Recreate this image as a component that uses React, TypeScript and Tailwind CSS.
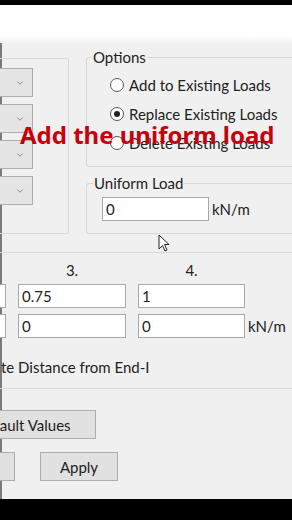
import { ChevronDown } from 'lucide-react';

const ui = { fontFamily: 'Lato, "Liberation Sans", sans-serif' };

function Combo() {
  return (
    <div className="flex h-[29px] w-[33px] items-center justify-end border border-l-0 border-[#adadad] bg-[#e5e5e5] pr-[7px]">
      <ChevronDown size={10} strokeWidth={2} className="text-[#777]" />
    </div>
  );
}

function Radio({ label, checked }: { label: string; checked?: boolean }) {
  return (
    <label className="flex h-[20px] items-center gap-[5px]">
      <span className="flex h-[14px] w-[14px] items-center justify-center rounded-full border border-[#555] bg-white">
        {checked && <span className="h-[6px] w-[6px] rounded-full bg-[#222]" />}
      </span>
      <span>{label}</span>
    </label>
  );
}

function Field({ value, w }: { value?: string; w: string }) {
  return (
    <div className={`flex h-[24px] ${w} items-center border border-[#a8a8a8] bg-white px-[3px]`}>
      {value}
    </div>
  );
}

function Cursor() {
  return (
    <svg width="13" height="19" viewBox="0 0 13 19" className="absolute left-[158px] top-[234px]">
      <path d="M1 1 L1 15 L4.5 11.5 L7 17 L9 16 L6.5 10.5 L11 10.5 Z" fill="white" stroke="#222" strokeWidth="1" strokeLinejoin="round" />
    </svg>
  );
}

export default function App() {
  return (
    <div className="relative h-[520px] w-[292px] overflow-hidden bg-black text-[15px] leading-[16px] text-[#222]" style={ui}>
      <div className="mt-[5px] h-[30px] bg-white" />
      <div className="h-[8px] bg-gradient-to-b from-white to-[#f2f2f2]" />

      <div className="flex h-[456px] flex-col border-l-2 border-[#7a7a7a] bg-[#f0f0f0]">
        <div className="flex items-start">
          {/* left group */}
          <div className="-ml-[2px] mt-[15px] flex h-[176px] w-[69px] shrink-0 flex-col gap-[7px] rounded-r-[3px] border border-l-0 border-[#d8d8d8] pt-[9px]">
            <Combo />
            <Combo />
            <Combo />
            <Combo />
          </div>

          <div className="ml-[17px] mt-[6px] flex w-[230px] shrink-0 flex-col gap-[8px]">
            <fieldset className="h-[118px] rounded-[3px] border border-r-0 border-[#d8d8d8]">
              <legend className="ml-[5px] px-[1px]">Options</legend>
              <div className="flex flex-col gap-[9px] pl-[23px] pt-[10px]">
                <Radio label="Add to Existing Loads" />
                <Radio label="Replace Existing Loads" checked />
                <Radio label="Delete Existing Loads" />
              </div>
            </fieldset>

            <fieldset className="h-[59px] rounded-[3px] border border-r-0 border-[#d8d8d8]">
              <legend className="ml-[6px] px-[1px]">Uniform Load</legend>
              <div className="flex items-center gap-[3px] pl-[15px] pt-[6px]">
                <Field value="0" w="w-[107px]" />
                <span>kN/m</span>
              </div>
            </fieldset>
          </div>
        </div>

        {/* trapezoidal group */}
        <div className="-ml-[2px] mt-[18px] flex h-[137px] flex-col border-y border-[#d8d8d8] pt-[9px]">
          <div className="-ml-[102px] flex gap-[12px]">
            <div className="flex w-[108px] flex-col">
              <div className="h-[16px]" />
              <div className="mt-[6px] flex flex-col gap-[6px]">
                <Field w="w-[108px]" />
                <Field w="w-[108px]" />
              </div>
            </div>
            <div className="flex w-[108px] flex-col">
              <div className="h-[16px] text-center">3.</div>
              <div className="mt-[6px] flex flex-col gap-[6px]">
                <Field value="0.75" w="w-[108px]" />
                <Field value="0" w="w-[108px]" />
              </div>
            </div>
            <div className="flex flex-col">
              <div className="h-[16px] w-[107px] text-center">4.</div>
              <div className="mt-[6px] flex flex-col gap-[6px]">
                <Field value="1" w="w-[107px]" />
                <div className="flex items-center gap-[3px]">
                  <Field value="0" w="w-[107px]" />
                  <span>kN/m</span>
                </div>
              </div>
            </div>
          </div>
          <div className="ml-[1px] mt-[21px]">te Distance from End-I</div>
        </div>

        <button className="-ml-[52px] mt-[21px] h-[29px] w-[146px] border border-[#adadad] bg-[#e1e1e1] text-center">
          Default Values
        </button>
        <div className="-ml-[65px] mt-[13px] flex gap-[25px]">
          <button className="h-[29px] w-[78px] border border-[#adadad] bg-[#e1e1e1] text-transparent">OK</button>
          <button className="h-[29px] w-[78px] border border-[#adadad] bg-[#e1e1e1]">Apply</button>
        </div>
      </div>

      <div
        className="absolute left-[20px] top-[120px] text-[24px] font-bold leading-[30px] text-[#c8000c]"
        style={{ fontFamily: '"Noto Sans", "Noto Sans CJK TC", sans-serif' }}
      >
        Add the uniform load
      </div>
      <Cursor />
    </div>
  );
}
